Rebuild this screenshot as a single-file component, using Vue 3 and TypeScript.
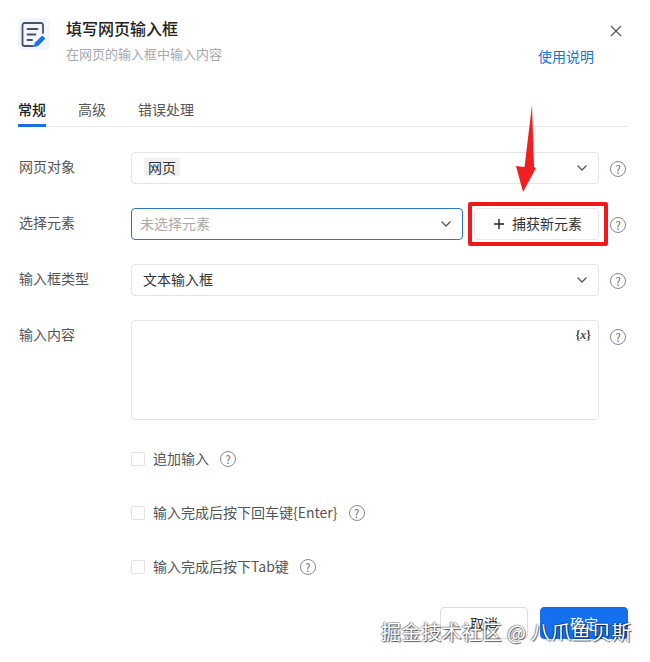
<script setup lang="ts">
const tabs: string[] = ['常规', '高级', '错误处理']
const checks: string[] = ['追加输入', '输入完成后按下回车键{Enter}', '输入完成后按下Tab键']
</script>

<template>
  <div class="page">
    <header class="head">
      <div class="logo">
        <svg width="32" height="32" viewBox="0 0 32 32" fill="none">
          <path d="M25 15V7a2 2 0 0 0-2-2H6.500a2 2 0 0 0-2 2v19a2 2 0 0 0 2 2H15" stroke="#4a5160" stroke-width="1.800" stroke-linecap="round" />
          <path d="M9.500 11h10M9.500 16.500h8M9.500 22h4.500" stroke="#4a5160" stroke-width="1.800" stroke-linecap="round" />
          <path d="M24.300 18.300l2.200 2.200-6.800 7-3.200.9.800-3.200z" fill="#1a73e8" stroke="#1a73e8" stroke-width="1.200" stroke-linejoin="round" />
        </svg>
      </div>
      <div class="titles">
        <div class="title">填写网页输入框</div>
        <div class="sub">在网页的输入框中输入内容</div>
      </div>
      <div class="side">
        <svg class="close" width="14" height="14" viewBox="0 0 14 14" fill="none">
          <path d="M2 2l10 10M12 2L2 12" stroke="#555" stroke-width="1.200" />
        </svg>
        <a class="doc">使用说明</a>
      </div>
    </header>

    <nav class="tabs">
      <span v-for="(t, i) in tabs" :key="t" class="tab" :class="{ on: i === 0 }">{{ t }}</span>
    </nav>

    <section class="form">
      <div class="row">
        <label class="lab">网页对象</label>
        <div class="box sel"><span class="chip">网页</span><svg class="chev" width="12" height="8" viewBox="0 0 12 8" fill="none"><path d="M1.500 1.500L6 6l4.500-4.500" stroke="#555" stroke-width="1.300" /></svg></div>
        <span class="q">?</span>
      </div>
      <div class="row">
        <label class="lab">选择元素</label>
        <div class="split">
          <div class="box sel focus"><span class="ph">未选择元素</span><svg class="chev" width="12" height="8" viewBox="0 0 12 8" fill="none"><path d="M1.500 1.500L6 6l4.500-4.500" stroke="#555" stroke-width="1.300" /></svg></div>
          <button class="capture">
            <svg width="12" height="12" viewBox="0 0 12 12" fill="none"><path d="M6 1v10M1 6h10" stroke="#222" stroke-width="1.400" /></svg>
            捕获新元素
          </button>
          <span class="mark"></span>
        </div>
        <span class="q">?</span>
      </div>
      <div class="row">
        <label class="lab">输入框类型</label>
        <div class="box sel"><span class="val">文本输入框</span><svg class="chev" width="12" height="8" viewBox="0 0 12 8" fill="none"><path d="M1.500 1.500L6 6l4.500-4.500" stroke="#555" stroke-width="1.300" /></svg></div>
        <span class="q">?</span>
      </div>
      <div class="row top">
        <label class="lab">输入内容</label>
        <div class="box area"><span class="fx">{<i>x</i>}</span></div>
        <span class="q">?</span>
      </div>
    </section>

    <section class="checks">
      <div v-for="c in checks" :key="c" class="check">
        <span class="cb"></span>
        <span class="ctext">{{ c }}</span>
        <span class="q">?</span>
      </div>
    </section>

    <footer class="foot">
      <button class="btn">取消</button>
      <button class="btn primary">确定</button>
    </footer>

    <svg class="arrow" width="24" height="90" viewBox="0 0 24 90" fill="none">
      <path d="M18 0L20 62L22 63L9 87L2 61L10.500 62Z" fill="#f02020" />
    </svg>
    <div class="wm">掘金技术社区 @ 八爪鱼贝斯</div>
  </div>
</template>

<style>
html, body { background: #fff; }
</style>

<style scoped>
.page {
  position: relative;
  width: 650px;
  height: 662px;
  box-sizing: border-box;
  padding: 18px 22px 0 18px;
  overflow: hidden;
  background: #fff;
  font-family: "Noto Sans CJK SC", "Noto Sans", sans-serif;
  font-size: 14px;
  color: #333;
}
.head { display: flex; height: 50px; }
.logo {
  width: 32px;
  height: 32px;
  border-radius: 5px;
  background: #f1f5fd;
}
.titles { margin-left: 16px; flex: 1; margin-top: -1px; }
.title { font-size: 16px; font-weight: 500; line-height: 22px; color: #222; }
.sub { font-size: 13px; line-height: 18px; margin-top: 6px; color: #a8a8a8; }
.side { width: 90px; position: relative; }
.close { position: absolute; right: 5px; top: 6px; }
.doc { position: absolute; right: 34px; top: 28px; line-height: 20px; color: #1a73d4; white-space: nowrap; }
.tabs {
  display: flex;
  gap: 32px;
  margin-top: 29px;
  height: 30px;
  border-bottom: 1px solid #e6e6e6;
  box-sizing: border-box;
}
.tab { line-height: 20px; height: 29px; box-sizing: border-box; color: #555; margin-top: 2px; }
.tab.on { color: #222; font-weight: 500; border-bottom: 3px solid #1a6fe0; height: 28px; }
.form { display: flex; flex-direction: column; gap: 24px; margin-top: 25px; }
.row { display: flex; align-items: center; }
.row.top { align-items: flex-start; }
.lab { width: 112px; padding-left: 1px; flex: none; color: #555; line-height: 32px; margin-top: -4px; }
.row.top .lab { margin-top: -2px; }
.box {
  box-sizing: border-box;
  border: 1px solid #e5e5e5;
  border-radius: 4px;
  background: #fff;
  width: 468px;
  flex: none;
}
.sel { height: 32px; display: flex; align-items: center; justify-content: space-between; padding: 0 10px 2px 8px; }
.chip { background: #eff0f1; padding: 0 4px; line-height: 18px; font-size: 14px; color: #333; margin-left: 4px; }
.val { color: #333; margin-left: 3px; font-size: 14px; }
.ph { color: #aaa; font-size: 14px; }
.chev { flex: none; margin-top: 2px; }
.focus { width: 332px; border-color: #2a76c6; }
.split { position: relative; display: flex; gap: 11px; width: 468px; flex: none; }
.capture {
  width: 125px;
  height: 32px;
  box-sizing: border-box;
  border: 1px solid #e8e8e8;
  border-radius: 4px;
  background: #fff;
  font: inherit;
  font-size: 14px;
  color: #333;
  display: flex;
  align-items: center;
  justify-content: center;
  gap: 7px;
  padding: 0 0 2px 2px;
}
.capture svg { margin-top: 2px; }
.mark {
  position: absolute;
  left: 337px;
  top: -6px;
  width: 140px;
  height: 44px;
  box-sizing: border-box;
  border: 4px solid #f01818;
  border-radius: 2px;
}
.q {
  width: 16px;
  height: 16px;
  box-sizing: border-box;
  border: 1px solid #888;
  border-radius: 50%;
  font-size: 11px;
  line-height: 14px;
  text-align: center;
  color: #666;
  flex: none;
  margin-left: 11px;
  margin-top: 2px;
}
.row.top .q { margin-top: 9px; }
.area { height: 100px; position: relative; }
.fx {
  position: absolute;
  right: 7px;
  top: 6px;
  font-size: 12px;
  line-height: 16px;
  font-family: "Liberation Serif", serif;
  color: #444;
  font-weight: 700;
}
.checks { display: flex; flex-direction: column; gap: 32px; margin: 28px 0 0 113px; }
.check { display: flex; align-items: center; height: 22px; }
.cb {
  width: 14px;
  height: 14px;
  box-sizing: border-box;
  border: 1px solid #e2e2e2;
  border-radius: 2px;
  flex: none;
}
.ctext { margin-left: 8px; font-size: 14px; color: #555; margin-top: -2px; }
.check .q { margin-left: 11px; margin-top: -1px; }
.foot { display: flex; justify-content: flex-end; gap: 12px; margin-top: 29px; }
.btn {
  width: 88px;
  height: 32px;
  box-sizing: border-box;
  border: 1px solid #ddd;
  border-radius: 4px;
  background: #fff;
  font: inherit;
  color: #333;
  padding: 0;
}
.btn.primary { background: #1570f0; border-color: #1570f0; color: #fff; }
.arrow { position: absolute; left: 514px; top: 105px; }
.wm {
  position: absolute;
  left: 381px;
  top: 618px;
  font-size: 20px;
  line-height: 28px;
  letter-spacing: 0.2px;
  white-space: nowrap;
  color: #fff;
  text-shadow: 1px 1px 1px rgba(0, 0, 0, .65), -1px 0 1px rgba(0, 0, 0, .4), 0 -1px 1px rgba(0, 0, 0, .3);
}
</style>
